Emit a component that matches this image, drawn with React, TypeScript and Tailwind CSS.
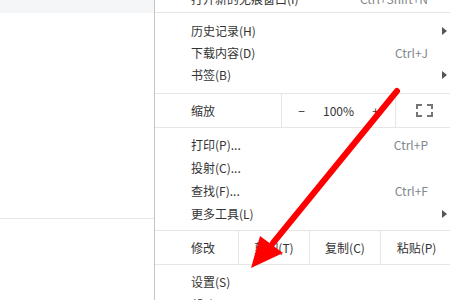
import React from "react";

const font = { fontFamily: '"Noto Sans CJK SC", "Noto Sans", sans-serif' };

const SubArrow = () => (
  <svg width="5" height="8" viewBox="0 0 5 8" className="block">
    <path d="M0 0 L5 4 L0 8 Z" fill="#555" />
  </svg>
);

type ItemProps = { label: string; shortcut?: string; sub?: boolean; h?: string };

const Item = ({ label, shortcut, sub, h = "h-[23px]" }: ItemProps) => (
  <div className={`flex items-center pl-[36px] ${h}`}>
    <span className="flex-1 text-[#333]">{label}</span>
    {shortcut && <span className="text-[#80868b]">{shortcut}</span>}
    <span className="w-[24px] pl-[14px] flex items-center">{sub && <SubArrow />}</span>
  </div>
);

const Sep = () => <div className="h-px bg-[#e6e6e6]" />;

export default function App() {
  return (
    <div className="relative w-[450px] h-[300px] overflow-hidden bg-white text-[12px]" style={font}>
      <div className="flex h-full">
        {/* page behind the menu */}
        <div className="w-[154px] shrink-0">
          <div className="h-[13px] bg-[#f5f6f8]" />
          <div className="h-[205px]" />
          <div className="h-px bg-[#e8e8e8]" />
        </div>
        <div className="w-px bg-[#c4c4c4] shrink-0" />

        {/* menu */}
        <div className="flex-1">
          <div className="mt-[-13px] pb-[2px]">
            <Item label="打开新的无痕窗口(I)" shortcut="Ctrl+Shift+N" />
          </div>
          <Sep />
          <div className="py-[7px]">
            <Item label="历史记录(H)" sub h="h-[22px]" />
            <Item label="下载内容(D)" shortcut="Ctrl+J" h="h-[22px]" />
            <Item label="书签(B)" sub h="h-[22px]" />
          </div>
          <Sep />
          <div className="flex h-[33px] items-stretch">
            <div className="w-[127px] pl-[36px] flex items-center border-r border-[#e6e6e6] text-[#333]">缩放</div>
            <div className="w-[114px] flex items-center justify-center border-r border-[#e6e6e6] text-[#333]">
              <span className="w-[24px] text-center">−</span>
              <span className="w-[50px] text-center">100%</span>
              <span className="w-[24px] text-center">+</span>
            </div>
            <div className="flex-1 flex items-center pl-[20px]">
              <svg width="17" height="13" viewBox="0 0 17 13" fill="none" stroke="#757575" strokeWidth="2">
                <path d="M1 5 V1 H6 M11 1 H16 V5 M16 8 V12 H11 M6 12 H1 V8" />
              </svg>
            </div>
          </div>
          <Sep />
          <div className="py-[5px]">
            <Item label="打印(P)..." shortcut="Ctrl+P" />
            <Item label="投射(C)..." />
            <Item label="查找(F)..." shortcut="Ctrl+F" />
            <Item label="更多工具(L)" sub />
          </div>
          <Sep />
          <div className="flex h-[33px] items-stretch text-[#333]">
            <div className="w-[84px] pl-[36px] flex items-center border-r border-[#e6e6e6]">修改</div>
            <div className="w-[71px] flex items-center justify-center border-r border-[#e6e6e6]">剪切(T)</div>
            <div className="w-[71px] flex items-center justify-center border-r border-[#e6e6e6]">复制(C)</div>
            <div className="w-[71px] shrink-0 flex items-center justify-center">粘贴(P)</div>
          </div>
          <Sep />
          <div className="pt-[5px]">
            <Item label="设置(S)" />
            <Item label="帮助(E)" sub />
          </div>
        </div>
      </div>

      {/* red annotation arrow */}
      <svg className="absolute inset-0 pointer-events-none" width="450" height="300" viewBox="0 0 450 300">
        <line x1="397" y1="91" x2="273" y2="243" stroke="#ff0000" strokeWidth="6" strokeLinecap="round" />
        <polygon points="251,268 260,236 283,253" fill="#ff0000" />
      </svg>
    </div>
  );
}
